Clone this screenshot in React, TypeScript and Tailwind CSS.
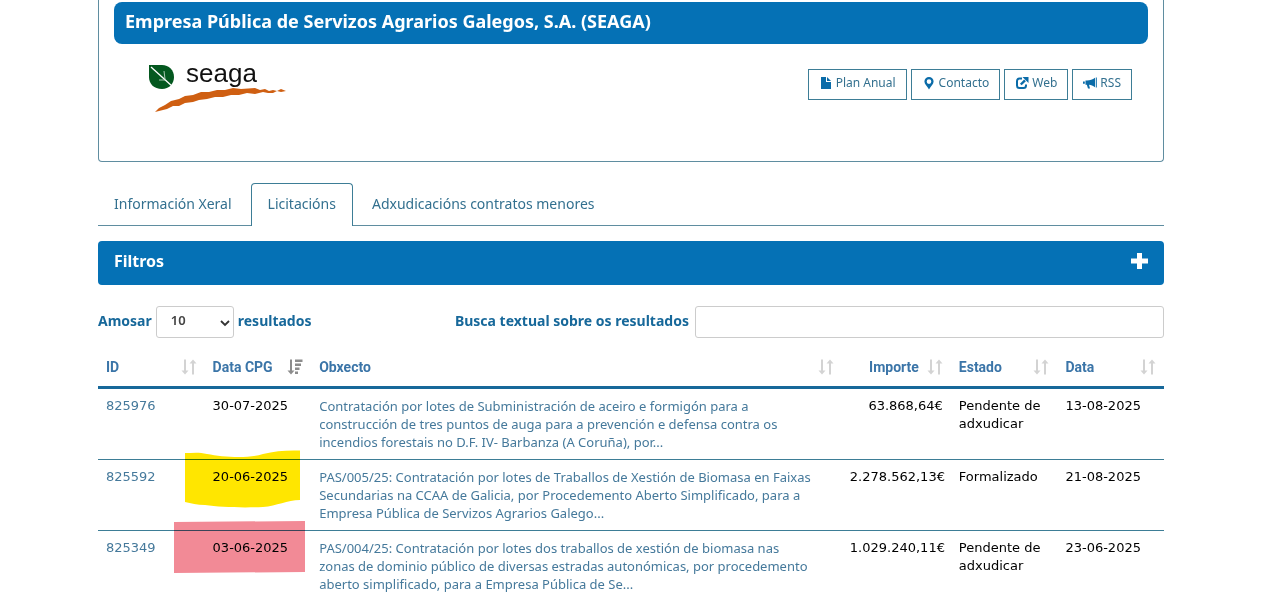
import type { ReactNode } from 'react';

interface Tender {
  id: string;
  cpgDate: string;
  subject: string;
  amount: string;
  status: string;
  date: string;
  mark?: 'yellow' | 'red';
}

const tenders: Tender[] = [
  {
    id: '825976',
    cpgDate: '30-07-2025',
    subject:
      'Contratación por lotes de Subministración de aceiro e formigón para a\nconstrucción de tres puntos de auga para a prevención e defensa contra os\nincendios forestais no D.F. IV- Barbanza (A Coruña), por...',
    amount: '63.868,64€',
    status: 'Pendente de adxudicar',
    date: '13-08-2025',
  },
  {
    id: '825592',
    cpgDate: '20-06-2025',
    subject:
      'PAS/005/25: Contratación por lotes de Traballos de Xestión de Biomasa en Faixas\nSecundarias na CCAA de Galicia, por Procedemento Aberto Simplificado, para a\nEmpresa Pública de Servizos Agrarios Galego...',
    amount: '2.278.562,13€',
    status: 'Formalizado',
    date: '21-08-2025',
    mark: 'yellow',
  },
  {
    id: '825349',
    cpgDate: '03-06-2025',
    subject:
      'PAS/004/25: Contratación por lotes dos traballos de xestión de biomasa nas\nzonas de dominio público de diversas estradas autonómicas, por procedemento\naberto simplificado, para a Empresa Pública de Se...',
    amount: '1.029.240,11€',
    status: 'Pendente de adxudicar',
    date: '23-06-2025',
    mark: 'red',
  },
];

function SeagaLogo() {
  return (
    <svg className="h-16 w-36" viewBox="0 -8 144 64" role="img" aria-label="seaga">
      <path d="M2 5H15C22 5 27 10 27 17C27 24 22 29 15 29C7 29 2 24 2 17Z" fill="#04581f" />
      <path d="M4 7L26 27" stroke="#fff" strokeWidth="1.3" fill="none" />
      <path d="M17 11L18 19M12 20L18 20" stroke="#cfe3d4" strokeWidth="0.8" fill="none" />
      <text x="39" y="22" fontFamily="Liberation Sans, Arial, sans-serif" fontSize="26" fill="#111">
        seaga
      </text>
      <path
        d="M8 52L12 48L18 45L24 41L32 39L38 36L46 35L54 32L62 32L70 30L78 30L86 28L94 29L108 28L113 30L118 29L122 31L126 30L130 31L134 29L139 31L134 32L130 31L126 33L121 33L116 32L108 34L100 33L92 35L84 35L76 37L68 37L60 39L52 40L46 42L38 43L32 46L26 46L20 49L12 51Z"
        fill="#cf5f12"
      />
    </svg>
  );
}

function FileIcon() {
  return (
    <svg className="h-3.5 w-3.5" viewBox="-1 0 14 14" fill="currentColor">
      <path d="M1 1H6V6H11V13H1ZM7 1L11 5H7Z" />
    </svg>
  );
}

function PinIcon() {
  return (
    <svg className="h-3.5 w-3.5" viewBox="-1 0 14 14" fill="currentColor" fillRule="evenodd">
      <path d="M6 1A4.6 4.6 0 0 0 1.4 5.5C1.4 8 4.3 10.5 6 13.5C7.7 10.5 10.6 8 10.6 5.5A4.6 4.6 0 0 0 6 1ZM6 3.3A2.3 2.3 0 1 1 6 7.9A2.3 2.3 0 0 1 6 3.3Z" />
    </svg>
  );
}

function ShareIcon() {
  return (
    <svg className="h-3.5 w-3.5" viewBox="0 0 14 14" fill="none" stroke="currentColor">
      <path d="M7 2.5H4.5Q2 2.5 2 5V9.5Q2 12 4.5 12H8.5Q11 12 11 9.5V8.5" strokeWidth="2" />
      <path d="M5.8 8.5L10 4.3" strokeWidth="2.4" />
      <path d="M7.5 1H13.5V7Z" fill="currentColor" stroke="none" />
    </svg>
  );
}

function MegaphoneIcon() {
  return (
    <svg className="h-3.5 w-3.5" viewBox="0 0 14 14" fill="currentColor">
      <path d="M12.8 1.5H13.8V11.5H12.8ZM4 4.5C7 4.5 9.5 3.5 12 1.8V11.2C10 9.8 8 9 6 8.8L7 12.5H5L3.8 8.7H2.5V4.5ZM0 5.5H1.8V7.7H0Z" />
    </svg>
  );
}

function SortIcon({ active = false }: { active?: boolean }) {
  if (active) {
    return (
      <svg className="h-4 w-4 shrink-0" viewBox="0 0 16 16" fill="#8c8c8c">
        <path d="M3 0.5H5V11.5H7.5L4 15.5L0.5 11.5H3ZM8 0.5H15.5V3H8ZM8 4.5H14V7H8ZM8 8.5H12.5V11H8ZM8 12.5H11V15H8Z" />
      </svg>
    );
  }
  return (
    <svg className="h-4 w-4 shrink-0" viewBox="0 0 16 16" fill="#d3d3d3">
      <path d="M3 0.5H5V11.5H7.5L4 15.5L0.5 11.5H3ZM11 15.5H13V4.5H15.5L12 0.5L8.5 4.5H11Z" />
    </svg>
  );
}

function Marker({ color }: { color: 'yellow' | 'red' }) {
  if (color === 'yellow') {
    return (
      <svg
        className="pointer-events-none absolute -top-2.5 -left-5 h-[58px] w-[115px] mix-blend-multiply"
        viewBox="0 0 115 58"
        fill="#ffe600"
      >
        <path d="M0 3C8 3 14 2 22 4C38 7 62 9 78 4C90 1 102 0 115 0.5V50C102 50 92 56 78 57C55 58 35 57 20 55C12 55 6 53 0 52Z" />
      </svg>
    );
  }
  return (
    <svg
      className="pointer-events-none absolute -top-2.5 -left-8 h-[52px] w-[132px] mix-blend-multiply"
      viewBox="0 0 132 52"
      fill="#f28a96"
    >
      <path d="M1 1L132 0V51L1 52Z" />
    </svg>
  );
}

function ActionLink({ icon, children }: { icon: ReactNode; children: ReactNode }) {
  return (
    <a
      href="#"
      className="flex h-[31px] items-center gap-[3px] border border-[#3d7d96] px-2.5 pb-1 text-[#0a6ba8]"
    >
      {icon}
      <span className="text-[#33708f]">{children}</span>
    </a>
  );
}

interface HeaderCellProps {
  label: string;
  width?: string;
  active?: boolean;
  right?: boolean;
}

function HeaderCell({ label, width = '', active, right }: HeaderCellProps) {
  return (
    <th scope="col" className={`${width} px-2 pt-[11px] pb-[9px]`}>
      <button
        type="button"
        className={`flex w-full items-center font-bold ${right ? 'justify-end gap-2' : 'justify-between'}`}
      >
        {label}
        <SortIcon active={active} />
      </button>
    </th>
  );
}

export default function App() {
  return (
    <main className="bg-white pr-[116px] pl-[98px] font-['Noto_Sans',sans-serif] text-sm text-[#33708f]">
      <section className="rounded-b border border-t-0 border-[#5f8da0] px-[15px] pt-0.5 pb-[45px]">
        <h1 className="rounded-lg bg-[#0571b5] px-[11px] pt-[5px] pb-[9px] text-lg font-bold text-white">
          Empresa Pública de Servizos Agrarios Galegos, S.A. (SEAGA)
        </h1>
        <div className="flex items-start justify-between pt-2 pr-4 pl-[33px]">
          <SeagaLogo />
          <nav className="flex gap-1 pt-[17px] text-xs">
            <ActionLink icon={<FileIcon />}>Plan Anual</ActionLink>
            <ActionLink icon={<PinIcon />}>Contacto</ActionLink>
            <ActionLink icon={<ShareIcon />}>Web</ActionLink>
            <ActionLink icon={<MegaphoneIcon />}>RSS</ActionLink>
          </nav>
        </div>
      </section>

      <nav className="mt-[21px] flex gap-[3px] border-b border-[#5f8da0]">
        <a href="#" className="px-4 py-[11px]">
          Información Xeral
        </a>
        <a
          href="#"
          aria-current="page"
          className="-mb-px rounded-t border border-b-0 border-[#3d7d96] bg-white px-4 pt-2.5 pb-3"
        >
          Licitacións
        </a>
        <a href="#" className="px-4 py-[11px]">
          Adxudicacións contratos menores
        </a>
      </nav>

      <button
        type="button"
        aria-expanded="false"
        className="mt-[15px] flex h-11 w-full items-center justify-between rounded bg-[#0571b5] px-4 pb-1 text-base font-bold text-white"
      >
        Filtros
        <svg className="h-4 w-[17px]" viewBox="0 0 17 16" fill="currentColor">
          <path d="M6 0H11V5.5H17V10.5H11V16H6V10.5H0V5.5H6Z" />
        </svg>
      </button>

      <div className="mt-[21px] flex items-center font-bold text-[#17689a]">
        <label htmlFor="page-size" className="pb-[3px]">
          Amosar
        </label>
        <div className="relative mx-1">
          <select
            id="page-size"
            className="block h-8 w-[78px] appearance-none rounded-[3px] border border-[#ccc] bg-white pb-1 pl-3.5 text-[13px] font-semibold text-[#444]"
          >
            <option>10</option>
            <option>25</option>
            <option>50</option>
          </select>
          <svg
            className="pointer-events-none absolute top-3 right-1 h-2.5 w-2.5"
            viewBox="0 0 10 10"
            fill="none"
            stroke="#333"
            strokeWidth="1.8"
          >
            <path d="M1 3L5 7L9 3" />
          </svg>
        </div>
        <span className="pb-[3px]">resultados</span>
        <label htmlFor="search" className="ml-auto pb-[3px]">
          Busca textual sobre os resultados
        </label>
        <input
          id="search"
          type="text"
          className="ml-1.5 h-8 w-[44%] rounded-[3px] border border-[#ccc] bg-white px-3"
        />
      </div>

      <table className="mt-2 w-full table-fixed border-collapse text-left">
        <thead className="border-b-3 border-[#17689a] font-['Roboto',sans-serif] text-[#3b75a8]">
          <tr>
            <HeaderCell label="ID" width="w-[10%]" />
            <HeaderCell label="Data CPG" width="w-[10%]" active />
            <HeaderCell label="Obxecto" />
            <HeaderCell label="Importe" width="w-[109px]" right />
            <HeaderCell label="Estado" width="w-[10%]" />
            <HeaderCell label="Data" width="w-[10%]" />
          </tr>
        </thead>
        <tbody className="align-top font-['DejaVu_Sans',Verdana,sans-serif] text-[13px] leading-[18px] text-black">
          {tenders.map((t) => (
            <tr key={t.id} className="border-b border-[#3d7d96]">
              <td className="p-2 text-[#45799b]">
                <a href="#">{t.id}</a>
              </td>
              <td className="relative p-2 whitespace-nowrap">
                {t.cpgDate}
                {t.mark && <Marker color={t.mark} />}
              </td>
              <td className="p-2 font-['Noto_Sans',sans-serif] whitespace-pre-line text-[#45799b]">
                <a href="#">{t.subject}</a>
              </td>
              <td className="p-2 text-right whitespace-nowrap">{t.amount}</td>
              <td className="p-2">{t.status}</td>
              <td className="p-2 whitespace-nowrap">{t.date}</td>
            </tr>
          ))}
        </tbody>
      </table>
    </main>
  );
}
